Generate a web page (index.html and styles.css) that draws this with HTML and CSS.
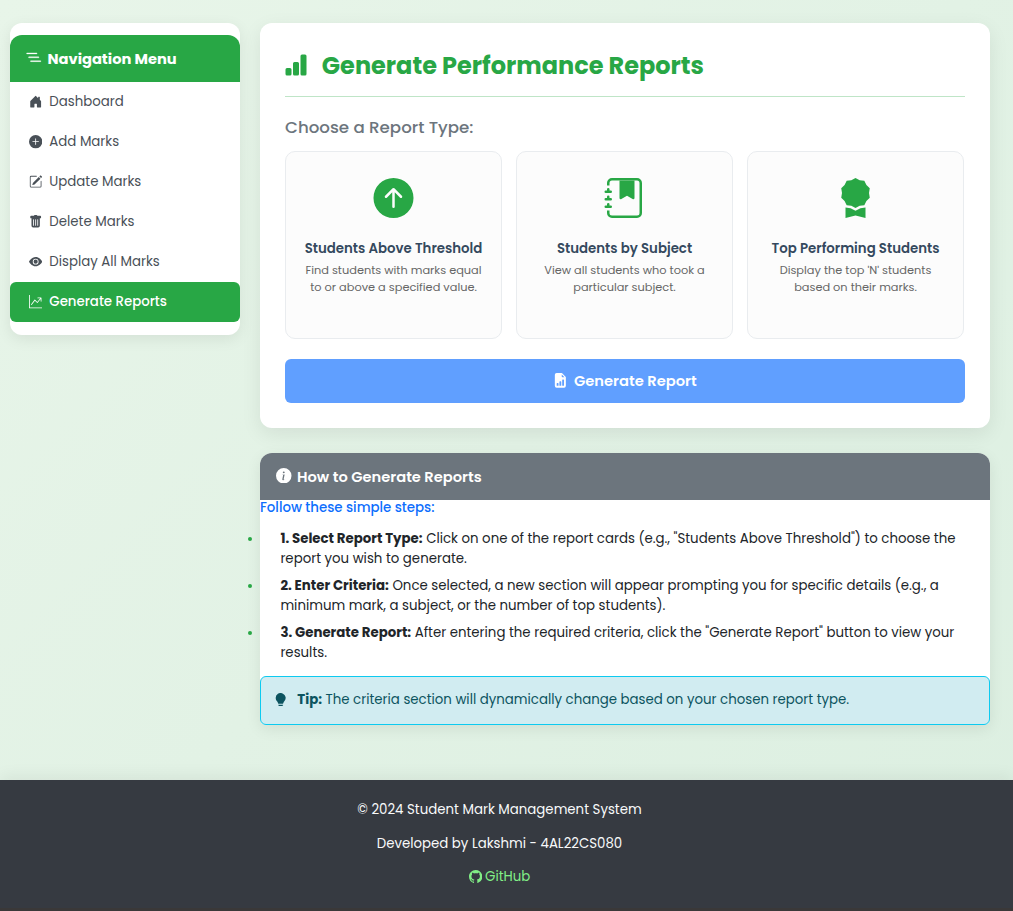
FILE: index.html
```html
<!DOCTYPE html>
<html lang="en">
<head>
<meta charset="utf-8">
<title>Generate Reports</title>
<link rel="stylesheet" href="styles.css">
</head>
<body>
<div class="layout">
  <aside class="sidebar">
    <div class="sidebar-head">
      <svg class="icon" viewBox="0 0 16 16"><path d="M4.5 11.5A.5.5 0 0 1 5 11h10a.5.5 0 0 1 0 1H5a.5.5 0 0 1-.5-.5m-2-4A.5.5 0 0 1 3 7h10a.5.5 0 0 1 0 1H3a.5.5 0 0 1-.5-.5m-2-4A.5.5 0 0 1 1 3h10a.5.5 0 0 1 0 1H1a.5.5 0 0 1-.5-.5"/></svg>
      <span>Navigation Menu</span>
    </div>
    <nav class="nav">
      <a class="nav-link"><svg class="icon" viewBox="0 0 16 16"><path d="M6.5 14.5v-3.505c0-.245.25-.495.5-.495h2c.25 0 .5.25.5.5v3.5a.5.5 0 0 0 .5.5h4a.5.5 0 0 0 .5-.5v-7a.5.5 0 0 0-.146-.354L13 5.793V2.5a.5.5 0 0 0-.5-.5h-1a.5.5 0 0 0-.5.5v1.293L8.354 1.146a.5.5 0 0 0-.708 0l-6 6A.5.5 0 0 0 1.5 7.5v7a.5.5 0 0 0 .5.5h4a.5.5 0 0 0 .5-.5"/></svg><span>Dashboard</span></a>
      <a class="nav-link"><svg class="icon" viewBox="0 0 16 16"><path d="M16 8A8 8 0 1 1 0 8a8 8 0 0 1 16 0M8.5 4.5a.5.5 0 0 0-1 0v3h-3a.5.5 0 0 0 0 1h3v3a.5.5 0 0 0 1 0v-3h3a.5.5 0 0 0 0-1h-3z"/></svg><span>Add Marks</span></a>
      <a class="nav-link"><svg class="icon" viewBox="0 0 16 16"><path d="M15.502 1.94a.5.5 0 0 1 0 .706L14.459 3.69l-2-2L13.502.646a.5.5 0 0 1 .707 0l1.293 1.293zm-1.75 2.456-2-2L4.939 9.21a.5.5 0 0 0-.121.196l-.805 2.414a.25.25 0 0 0 .316.316l2.414-.805a.5.5 0 0 0 .196-.12l6.813-6.814z"/><path fill-rule="evenodd" d="M1 13.5A1.5 1.5 0 0 0 2.5 15h11a1.5 1.5 0 0 0 1.5-1.5v-6a.5.5 0 0 0-1 0v6a.5.5 0 0 1-.5.5h-11a.5.5 0 0 1-.5-.5v-11a.5.5 0 0 1 .5-.5H9a.5.5 0 0 0 0-1H2.5A1.5 1.5 0 0 0 1 2.5z"/></svg><span>Update Marks</span></a>
      <a class="nav-link"><svg class="icon" viewBox="0 0 16 16"><path d="M2.5 1a1 1 0 0 0-1 1v1a1 1 0 0 0 1 1H3v9a2 2 0 0 0 2 2h6a2 2 0 0 0 2-2V4h.5a1 1 0 0 0 1-1V2a1 1 0 0 0-1-1H10a1 1 0 0 0-1-1H7a1 1 0 0 0-1 1zm3 4a.5.5 0 0 1 .5.5v7a.5.5 0 0 1-1 0v-7a.5.5 0 0 1 .5-.5M8 5a.5.5 0 0 1 .5.5v7a.5.5 0 0 1-1 0v-7A.5.5 0 0 1 8 5m3 .5v7a.5.5 0 0 1-1 0v-7a.5.5 0 0 1 1 0"/></svg><span>Delete Marks</span></a>
      <a class="nav-link"><svg class="icon" viewBox="0 0 16 16"><path d="M10.5 8a2.5 2.5 0 1 1-5 0 2.5 2.5 0 0 1 5 0"/><path d="M0 8s3-5.5 8-5.5S16 8 16 8s-3 5.5-8 5.5S0 8 0 8m8 3.5a3.5 3.5 0 1 0 0-7 3.5 3.5 0 0 0 0 7"/></svg><span>Display All Marks</span></a>
      <a class="nav-link active"><svg class="icon" viewBox="0 0 16 16"><path fill-rule="evenodd" d="M0 0h1v15h15v1H0zm10 3.5a.5.5 0 0 1 .5-.5h4a.5.5 0 0 1 .5.5v4a.5.5 0 0 1-1 0V4.9l-3.613 4.417a.5.5 0 0 1-.74.037L7.06 6.767l-3.656 5.027a.5.5 0 0 1-.808-.588l4-5.5a.5.5 0 0 1 .758-.06l2.609 2.61L13.445 4H10.5a.5.5 0 0 1-.5-.5"/></svg><span>Generate Reports</span></a>
    </nav>
  </aside>

  <main class="content">
    <section class="panel">
      <h1 class="title">
        <svg class="icon" viewBox="0 0 16 16"><path d="M1 11a1 1 0 0 1 1-1h2a1 1 0 0 1 1 1v3a1 1 0 0 1-1 1H2a1 1 0 0 1-1-1zm5-4a1 1 0 0 1 1-1h2a1 1 0 0 1 1 1v7a1 1 0 0 1-1 1H7a1 1 0 0 1-1-1zm5-5a1 1 0 0 1 1-1h2a1 1 0 0 1 1 1v12a1 1 0 0 1-1 1h-2a1 1 0 0 1-1-1z"/></svg>
        <span>Generate Performance Reports</span>
      </h1>
      <h2 class="subtitle">Choose a Report Type:</h2>
      <div class="cards">
        <article class="card">
          <svg class="icon" viewBox="0 0 16 16"><path d="M16 8A8 8 0 1 0 0 8a8 8 0 0 0 16 0m-7.5 3.5a.5.5 0 0 1-1 0V5.707L5.354 7.854a.5.5 0 1 1-.708-.708l3-3a.5.5 0 0 1 .708 0l3 3a.5.5 0 0 1-.708.708L8.5 5.707z"/></svg>
          <h3>Students Above Threshold</h3>
          <p>Find students with marks equal<br>to or above a specified value.</p>
        </article>
        <article class="card">
          <svg class="icon" viewBox="0 0 16 16"><path fill-rule="evenodd" d="M6 1h6v7a.5.5 0 0 1-.757.429L9 7.083 6.757 8.43A.5.5 0 0 1 6 8z"/><path d="M3 0h10a2 2 0 0 1 2 2v12a2 2 0 0 1-2 2H3a2 2 0 0 1-2-2v-1h1v1a1 1 0 0 0 1 1h10a1 1 0 0 0 1-1V2a1 1 0 0 0-1-1H3a1 1 0 0 0-1 1v1H1V2a2 2 0 0 1 2-2"/><path d="M1 5v-.5a.5.5 0 0 1 1 0V5h.5a.5.5 0 0 1 0 1h-2a.5.5 0 0 1 0-1zm0 3v-.5a.5.5 0 0 1 1 0V8h.5a.5.5 0 0 1 0 1h-2a.5.5 0 0 1 0-1zm0 3v-.5a.5.5 0 0 1 1 0v.5h.5a.5.5 0 0 1 0 1h-2a.5.5 0 0 1 0-1z"/></svg>
          <h3>Students by Subject</h3>
          <p>View all students who took a<br>particular subject.</p>
        </article>
        <article class="card">
          <svg class="icon" viewBox="0 0 16 16"><path d="m8 0 1.669.864 1.858.282.842 1.68 1.337 1.32L13.4 6l.306 1.854-1.337 1.32-.842 1.68-1.858.282L8 12l-1.669-.864-1.858-.282-.842-1.68-1.337-1.32L2.6 6l-.306-1.854 1.337-1.32.842-1.68L6.331.864z"/><path d="M4 11.794V16l4-1 4 1v-4.206l-2.018.306L8 13.126 6.018 12.1z"/></svg>
          <h3>Top Performing Students</h3>
          <p>Display the top 'N' students<br>based on their marks.</p>
        </article>
      </div>
      <button class="generate" type="button">
        <svg class="icon" viewBox="0 0 16 16"><path d="M9.293 0H4a2 2 0 0 0-2 2v12a2 2 0 0 0 2 2h8a2 2 0 0 0 2-2V4.707A1 1 0 0 0 13.707 4L10 .293A1 1 0 0 0 9.293 0M9.5 3.5v-2l3 3h-2a1 1 0 0 1-1-1m.5 10v-6a.5.5 0 0 1 .5-.5h1a.5.5 0 0 1 .5.5v6a.5.5 0 0 1-.5.5h-1a.5.5 0 0 1-.5-.5m-2.5.5a.5.5 0 0 1-.5-.5v-4a.5.5 0 0 1 .5-.5h1a.5.5 0 0 1 .5.5v4a.5.5 0 0 1-.5.5zm-3 0a.5.5 0 0 1-.5-.5v-2a.5.5 0 0 1 .5-.5h1a.5.5 0 0 1 .5.5v2a.5.5 0 0 1-.5.5z"/></svg>
        <span>Generate Report</span>
      </button>
    </section>

    <section class="help">
      <div class="help-head">
        <svg class="icon" viewBox="0 0 16 16"><path d="M8 16A8 8 0 1 0 8 0a8 8 0 0 0 0 16m.93-9.412-1 4.705c-.07.34.029.533.304.533.194 0 .487-.07.686-.246l-.088.416c-.287.346-.92.598-1.465.598-.703 0-1.002-.422-.808-1.319l.738-3.468c.064-.293.006-.399-.287-.47l-.451-.081.082-.381 2.29-.287zM8 5.5a1 1 0 1 1 0-2 1 1 0 0 1 0 2"/></svg>
        <span>How to Generate Reports</span>
      </div>
      <p class="lead">Follow these simple steps:</p>
      <ul class="steps">
        <li><b>1. Select Report Type:</b> <span>Click on one of the report cards (e.g., "Students Above Threshold") to choose the</span><br><span>report you wish to generate.</span></li>
        <li><b>2. Enter Criteria:</b> <span>Once selected, a new section will appear prompting you for specific details (e.g., a</span><br><span>minimum mark, a subject, or the number of top students).</span></li>
        <li><b>3. Generate Report:</b> <span>After entering the required criteria, click the "Generate Report" button to view your</span><br><span>results.</span></li>
      </ul>
      <div class="tip">
        <svg class="icon" viewBox="0 0 16 16"><path d="M2 6a6 6 0 1 1 10.174 4.31c-.203.196-.359.4-.453.619l-.762 1.769A.5.5 0 0 1 10.5 13h-5a.5.5 0 0 1-.46-.302l-.761-1.77a2 2 0 0 0-.453-.618A5.98 5.98 0 0 1 2 6m3 8.5a.5.5 0 0 1 .5-.5h5a.5.5 0 0 1 0 1l-.224.447a1 1 0 0 1-.894.553H6.618a1 1 0 0 1-.894-.553L5.5 15a.5.5 0 0 1-.5-.5"/></svg>
        <p><b>Tip:</b> The criteria section will dynamically change based on your chosen report type.</p>
      </div>
    </section>
  </main>
</div>
<footer class="footer">
  <p>© 2024 Student Mark Management System</p>
  <p>Developed by Lakshmi - 4AL22CS080</p>
  <a class="github"><svg class="icon" viewBox="0 0 16 16"><path d="M8 0C3.58 0 0 3.58 0 8c0 3.54 2.29 6.53 5.47 7.59.4.07.55-.17.55-.38 0-.19-.01-.82-.01-1.49-2.01.37-2.53-.49-2.69-.94-.09-.23-.48-.94-.82-1.13-.28-.15-.68-.52-.01-.53.63-.01 1.08.58 1.23.82.72 1.21 1.87.87 2.33.66.07-.52.28-.87.51-1.07-1.78-.2-3.64-.89-3.64-3.95 0-.87.31-1.59.82-2.15-.08-.2-.36-1.02.08-2.12 0 0 .67-.21 2.2.82.64-.18 1.32-.27 2-.27s1.36.09 2 .27c1.53-1.04 2.2-.82 2.2-.82.44 1.1.16 1.92.08 2.12.51.56.82 1.27.82 2.15 0 3.07-1.87 3.75-3.65 3.95.29.25.54.73.54 1.48 0 1.07-.01 1.93-.01 2.2 0 .21.15.46.55.38A8.01 8.01 0 0 0 16 8c0-4.42-3.58-8-8-8"/></svg><span>GitHub</span></a>
</footer>
</body>
</html>
```
FILE: styles.css
```css
* { box-sizing: border-box; }

body {
  margin: 0;
  height: 911px;
  display: flex;
  flex-direction: column;
  overflow: hidden;
  background: linear-gradient(135deg, #e8f5e9, #dcefe1);
  font: 400 13.34px/20px Poppins, Inter, sans-serif;
  color: #212529;
}

h1, h2, h3, p, ul { margin: 0; padding: 0; }

.icon { flex: none; display: block; fill: currentColor; width: 1em; height: 1em; }

.layout {
  display: flex;
  align-items: flex-start;
  gap: 20px;
  height: 780px;
  padding: 23px 23px 0 10px;
}

/* Sidebar */
.sidebar {
  width: 230px;
  height: 312px;
  padding-top: 12px;
  background: #fff;
  border-radius: 12px;
  box-shadow: 0 4px 15px rgba(0, 0, 0, .08);
}
.sidebar-head {
  display: flex;
  align-items: center;
  gap: 6px;
  height: 47px;
  padding: 1px 0 0 16px;
  border-radius: 12px 12px 0 0;
  background: #28a745;
  color: #fff;
  font-size: 14.67px;
  font-weight: 700;
}
.sidebar-head .icon { width: 15.5px; height: 15.5px; margin-top: -3px; stroke: currentColor; stroke-width: .35; }
.nav-link {
  display: flex;
  align-items: center;
  gap: 7px;
  height: 40px;
  padding: 0 0 1px 19px;
  border-radius: 6px;
  color: #495057;
}
.nav-link .icon { margin-top: 1px; }
.active { background: #28a745; color: #fff; font-weight: 500; }

/* Report panel */
.content { flex: 1; display: flex; flex-direction: column; gap: 25px; }
.panel {
  height: 405px;
  padding: 25px;
  background: #fff;
  border-radius: 12px;
  box-shadow: 0 6px 20px rgba(0, 0, 0, .08);
}
.title {
  display: flex;
  align-items: center;
  gap: 13.5px;
  height: 49px;
  padding-bottom: 12px;
  border-bottom: 1px solid #bfe5c7;
  color: #28a745;
  font-size: 24px;
  font-weight: 700;
}
.title .icon { margin: -3px 0 0 -.7px; }
.subtitle {
  height: 54px;
  padding-top: 20px;
  color: #6c757d;
  font-size: 16.67px;
  font-weight: 500;
}
.cards { display: grid; grid-template-columns: repeat(3, 217px); gap: 14px; }
.card {
  display: flex;
  flex-direction: column;
  align-items: center;
  height: 188px;
  padding-top: 26px;
  background: #fcfcfc;
  border: 1px solid #e9ecef;
  border-radius: 10px;
  text-align: center;
}
.card .icon { width: 41px; height: 40px; color: #28a745; }
.card h3 {
  margin-top: 21px;
  color: #34495e;
  font-size: 13.34px;
  font-weight: 600;
  line-height: 20px;
}
.card p { margin-top: 3px; color: #666; font-size: 11.35px; line-height: 17px; }
.generate {
  display: flex;
  align-items: center;
  justify-content: center;
  gap: 6px;
  width: 100%;
  height: 44px;
  margin-top: 20px;
  padding: 0;
  border: 0;
  border-radius: 6px;
  background: #609fff;
  color: #fff;
  font: 600 14.7px/20px Poppins, Inter, sans-serif;
}
.generate .icon { margin-top: -1px; }

/* Instructions */
.help {
  height: 272px;
  background: #fff;
  border-radius: 12px 12px 6px 6px;
  box-shadow: 0 4px 15px rgba(0, 0, 0, .08);
}
.help-head {
  display: flex;
  align-items: center;
  gap: 5.5px;
  height: 47px;
  padding: 1px 0 0 16px;
  border-radius: 12px 12px 0 0;
  background: #6c757d;
  color: #fff;
  font-size: 14.67px;
  font-weight: 600;
}
.help-head .icon { width: 15.5px; height: 15.5px; margin-top: -3px; }
.lead { height: 29px; line-height: 15px; color: #0d6efd; font-weight: 500; }
.steps { padding-left: 20.4px; list-style: none; }
.steps li { position: relative; margin-bottom: 7px; }
.steps li::before {
  content: "";
  position: absolute;
  left: -32.4px;
  top: 8px;
  width: 4px;
  height: 4px;
  border-radius: 50%;
  background: #28a745;
}
b { font-weight: 700; }
.tip {
  display: flex;
  align-items: center;
  gap: 10px;
  height: 49px;
  margin-top: 13px;
  padding: 0 0 2px 13px;
  border: 1px solid #0dcaf0;
  border-radius: 6px;
  background: #d1ecf1;
  color: #0c5460;
}

/* Footer */
.footer {
  display: flex;
  flex: none;
  flex-direction: column;
  align-items: center;
  gap: 13.5px;
  height: 131px;
  padding: 20px 14px 0 0;
  border-bottom: 3px solid #3a3838;
  background: #363a41;
  box-shadow: 0 -4px 15px rgba(0, 0, 0, .06);
  color: #f8f9fa;
}
.github { display: flex; align-items: center; gap: 3px; color: #81ee86; }
```
